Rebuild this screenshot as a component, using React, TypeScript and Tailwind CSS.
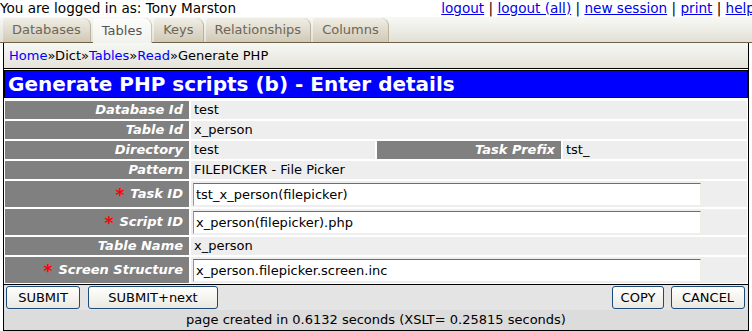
import React from "react";

const tabs = ["Databases", "Tables", "Keys", "Relationships", "Columns"];

function Label({ text, required }: { text: string; required?: boolean }) {
  return (
    <div className="flex items-center justify-end bg-[#808080] pr-[6px] font-bold italic text-white">
      {required && (
        <span className="mr-[6px] mt-[3px] text-[17px] not-italic leading-none text-[#ff0000]">*</span>
      )}
      {text}
    </div>
  );
}

function Value({ text, span }: { text: string; span?: boolean }) {
  return (
    <div className={`flex items-center bg-[#eeeeee] pl-[3px] text-black ${span ? "col-span-3" : ""}`}>
      {text}
    </div>
  );
}

function InputValue({ value }: { value: string }) {
  return (
    <div className="col-span-3 flex items-center bg-[#eeeeee] pl-[2px]">
      <input
        readOnly
        value={value}
        className="h-[23px] w-[508px] border border-t-[#716f64] border-l-[#9a978a] border-b-[#f1efe2] border-r-[#f1efe2] bg-white px-[2px] text-[13px] text-black outline-none"
      />
    </div>
  );
}

function Btn({ children, w }: { children: React.ReactNode; w: string }) {
  return (
    <button
      className={`${w} h-[23px] rounded-[3px] border border-[#1c4a7a] bg-gradient-to-b from-white to-[#ebe9e0] text-[13px] text-black`}
    >
      {children}
    </button>
  );
}

export default function App() {
  return (
    <div className="h-[331px] w-[752px] overflow-hidden bg-white font-['DejaVu_Sans',sans-serif] text-[13px] leading-[16px] text-black">
      <div className="flex h-[17px] justify-between whitespace-nowrap text-[13.6px]">
        <span>You are logged in as: Tony Marston</span>
        <span className="mr-[-3px]">
          <a className="text-[#0000ee] underline">logout</a> |{" "}
          <a className="text-[#0000ee] underline">logout (all)</a> |{" "}
          <a className="text-[#0000ee] underline">new session</a> |{" "}
          <a className="text-[#0000ee] underline">print</a> |{" "}
          <a className="text-[#0000ee] underline">help</a>
        </span>
      </div>

      <div className="flex h-[26px] items-end gap-[2px] border-b border-[#6e6148] bg-gradient-to-b from-[#f8f9f6] to-[#e2e0d6] pl-[3px]">
        {tabs.map((t) =>
          t === "Tables" ? (
            <div
              key={t}
              className="relative mb-[-1px] flex h-[25px] items-center rounded-tl-[3px] rounded-tr-[8px] border-r border-[#c9c3b2] bg-gradient-to-b from-[#fcfcfa] to-[#f2f2ed] px-[9px] text-[#555555]"
            >
              {t}
            </div>
          ) : (
            <div
              key={t}
              className="flex h-[24px] items-center rounded-tl-[3px] rounded-tr-[8px] border-r border-[#b9b19b] bg-gradient-to-b from-[#f1eee6] to-[#d0c9b5] px-[9px] text-[#6b6658]"
            >
              {t}
            </div>
          )
        )}
      </div>

      <div className="mx-[3px] border-x border-b border-black">
        <div className="flex h-[26px] items-center border-b border-black bg-gradient-to-b from-[#f6f8f4] to-[#e5e3da] pl-[5px]">
          <a className="text-[#0000ff]">Home</a>»Dict»<a className="text-[#0000ff]">Tables</a>»
          <a className="text-[#0000ff]">Read</a>»Generate PHP
        </div>

        <div className="mt-[1px] flex h-[28px] items-center border border-black bg-[#0000ff] pl-[3px] text-[20px] font-bold leading-[24px] text-white">
          Generate PHP scripts (b) - Enter details
        </div>

        <div className="grid grid-cols-[184px_184px_184px_184px] gap-[2px] pb-[1px] pl-[1px] pt-[3px] [grid-template-rows:18px_18px_18px_18px_26px_26px_18px_26px]">
          <Label text="Database Id" />
          <Value text="test" span />
          <Label text="Table Id" />
          <Value text="x_person" span />
          <Label text="Directory" />
          <Value text="test" />
          <Label text="Task Prefix" />
          <Value text="tst_" />
          <Label text="Pattern" />
          <Value text="FILEPICKER - File Picker" span />
          <Label text="Task ID" required />
          <InputValue value="tst_x_person(filepicker)" />
          <Label text="Script ID" required />
          <InputValue value="x_person(filepicker).php" />
          <Label text="Table Name" />
          <Value text="x_person" span />
          <Label text="Screen Structure" required />
          <InputValue value="x_person.filepicker.screen.inc" />
        </div>

        <div className="flex h-[26px] items-center border-t border-black bg-[#e4e4e4] pl-[2px] pr-[3px]">
          <Btn w="w-[74px]">SUBMIT</Btn>
          <div className="ml-[8px]">
            <Btn w="w-[130px]">SUBMIT+next</Btn>
          </div>
          <div className="ml-auto flex gap-[7px]">
            <Btn w="w-[52px]">COPY</Btn>
            <Btn w="w-[74px]">CANCEL</Btn>
          </div>
        </div>

        <div className="flex h-[20px] items-center justify-center bg-[#dcdcdc]">
          page created in 0.6132 seconds (XSLT= 0.25815 seconds)
        </div>
      </div>
    </div>
  );
}
